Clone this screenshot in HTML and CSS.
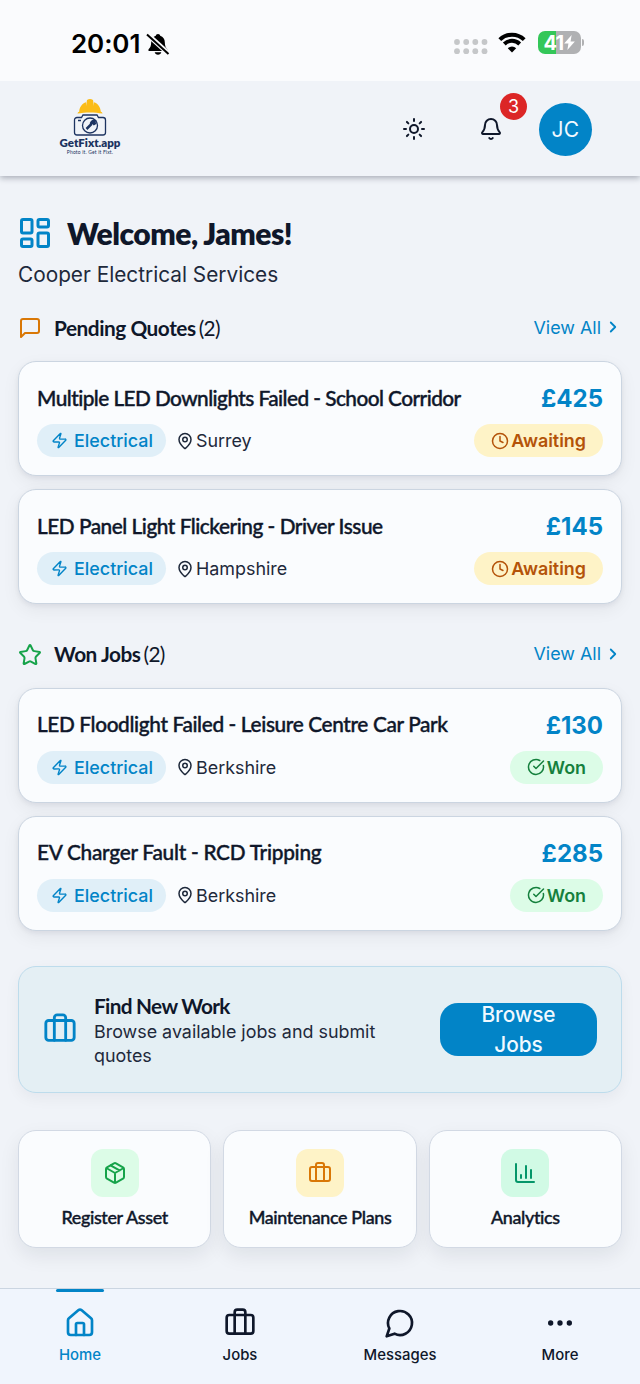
FILE: index.html
```html
<!DOCTYPE html>
<html lang="en">
<head>
<meta charset="utf-8">
<title>GetFixt.app</title>
<link rel="stylesheet" href="styles.css">
</head>
<body>
<svg class="sprite" aria-hidden="true">
  <symbol id="zap" viewBox="0 0 24 24"><path d="M4 14a1 1 0 0 1-.78-1.63l9.9-10.2a.5.5 0 0 1 .86.46l-1.92 6.02A1 1 0 0 0 13 10h7a1 1 0 0 1 .78 1.63l-9.9 10.2a.5.5 0 0 1-.86-.46l1.92-6.02A1 1 0 0 0 11 14z"/></symbol>
  <symbol id="pin" viewBox="0 0 24 24"><path d="M20 10c0 5-5.5 10.2-7.4 11.8a1 1 0 0 1-1.2 0C9.500 20.200 4 15 4 10a8 8 0 0 1 16 0"/><circle cx="12" cy="10" r="3"/></symbol>
  <symbol id="clock" viewBox="0 0 24 24"><circle cx="12" cy="12" r="10"/><path d="M12 6v6l4 2"/></symbol>
  <symbol id="check" viewBox="0 0 24 24"><path d="M21.800 10A10 10 0 1 1 17 3.340M9 11l3 3L22 4"/></symbol>
  <symbol id="chev" viewBox="0 0 24 24"><path d="m9 18 6-6-6-6"/></symbol>
  <symbol id="case" viewBox="0 0 24 24"><rect x="2" y="6" width="20" height="14" rx="2"/><path d="M16 20V4a2 2 0 0 0-2-2h-4a2 2 0 0 0-2 2v16"/></symbol>
</svg>

<div class="status">
  <span class="time">20:01</span>
  <svg class="mute" viewBox="0 0 24 24"><path class="solid" d="M12 2c1.300 0 2 .8 2.200 1.700 3 1 4.600 3.500 4.600 6.500 0 4 1.200 5.600 2.400 6.700.8.8.5 2.100-.7 2.100H3.500c-1.200 0-1.500-1.300-.7-2.100C4 15.800 5.200 14.200 5.200 10.200c0-3 1.600-5.500 4.600-6.500C10 2.800 10.700 2 12 2zM8.700 20.200h6.600c-.3 1.500-1.600 2.500-3.300 2.500s-3-1-3.300-2.500z"/><path class="gap" d="M1.500 2.500 23 22"/><path class="slash" d="M1 2.500 22.500 22"/></svg>
  <svg class="signal" viewBox="0 0 34 16"><g><circle cx="3" cy="3" r="2.900"/><circle cx="12.200" cy="3" r="2.900"/><circle cx="21.300" cy="3" r="2.900"/><circle cx="30.500" cy="3" r="2.900"/><circle cx="3" cy="12.200" r="2.900"/><circle cx="12.200" cy="12.200" r="2.900"/><circle cx="21.300" cy="12.200" r="2.900"/><circle cx="30.500" cy="12.200" r="2.900"/></g></svg>
  <svg class="wifi" viewBox="0 0 28 21"><path d="M1.800 7.600a17.500 17.500 0 0 1 24.400 0M6.300 12a11 11 0 0 1 15.400 0"/><path class="solid" d="M14 20.500l-4.200-4.200a6 6 0 0 1 8.400 0z"/></svg>
  <div class="battery"><span>41</span><svg viewBox="0 0 10 14"><path d="M7 0 0 8h4L3 14l7-8H6z"/></svg></div>
</div>

<header class="top">
  <div class="logo">
    <svg viewBox="0 0 40 38">
      <path class="hat" d="M7.500 15.500c0-1 1-1.600 1.700-1.800.2-4.500 3-8.300 6.800-9.500V8l1-6c2-1.300 4-1.300 6 0l1 6V4.200c3.800 1.200 6.600 5 6.800 9.500.8.200 1.700.8 1.700 1.800-7.500-1.500-17.500-1.500-25 0z"/>
      <path class="cam" d="M13 17h14l1.500 2.500H33a2.500 2.500 0 0 1 2.500 2.500v12.500A2.500 2.500 0 0 1 33 37H7a2.500 2.500 0 0 1-2.500-2.500V22A2.500 2.500 0 0 1 7 19.500h4.500zM8 22.500h3"/>
      <circle class="cam" cx="20" cy="27.500" r="7.500"/>
      <path class="wrench" d="m16.500 31 4.500-4.500a3 3 0 0 1 3.500-3.500l-1.500 2 1 1 2-1.200"/>
    </svg>
    <b>GetFixt.app</b>
    <small>Photo it. Get it Fixt.</small>
  </div>
  <svg class="ic sun" viewBox="0 0 24 24"><circle cx="12" cy="12" r="4"/><path d="M12 2v2M12 20v2M4.930 4.930l1.410 1.410M17.660 17.660l1.410 1.410M2 12h2M20 12h2M6.340 17.660l-1.410 1.410M19.070 4.930l-1.410 1.410"/></svg>
  <div class="bell">
    <svg class="ic" viewBox="0 0 24 24"><path d="M10.270 21a2 2 0 0 0 3.460 0M3.260 15.330A1 1 0 0 0 4 17h16a1 1 0 0 0 .74-1.670C19.410 13.960 18 12.500 18 8A6 6 0 0 0 6 8c0 4.500-1.410 5.960-2.740 7.330"/></svg>
    <span class="count">3</span>
  </div>
  <div class="avatar">JC</div>
</header>

<main>
  <h1><svg class="ic" viewBox="0 0 24 24"><rect x="3" y="3" width="7" height="9" rx="1"/><rect x="14" y="3" width="7" height="5" rx="1"/><rect x="14" y="12" width="7" height="9" rx="1"/><rect x="3" y="16" width="7" height="5" rx="1"/></svg><span>Welcome, James!</span></h1>
  <p class="company">Cooper Electrical Services</p>

  <section>
    <div class="head">
      <svg class="ic amber" viewBox="0 0 24 24"><path d="M21 15a2 2 0 0 1-2 2H7l-4 4V5a2 2 0 0 1 2-2h14a2 2 0 0 1 2 2z"/></svg>
      <h2>Pending Quotes</h2><span class="num">(2)</span>
      <a class="all">View All<svg class="ic"><use href="#chev"/></svg></a>
    </div>
    <article class="card">
      <div class="row"><h3 class="t1">Multiple LED Downlights Failed - School Corridor</h3><strong>£425</strong></div>
      <div class="row"><span class="tag"><svg class="ic"><use href="#zap"/></svg>Electrical</span><span class="place"><svg class="ic"><use href="#pin"/></svg>Surrey</span><span class="badge wait"><svg class="ic"><use href="#clock"/></svg>Awaiting</span></div>
    </article>
    <article class="card">
      <div class="row"><h3 class="t2">LED Panel Light Flickering - Driver Issue</h3><strong>£145</strong></div>
      <div class="row"><span class="tag"><svg class="ic"><use href="#zap"/></svg>Electrical</span><span class="place"><svg class="ic"><use href="#pin"/></svg>Hampshire</span><span class="badge wait"><svg class="ic"><use href="#clock"/></svg>Awaiting</span></div>
    </article>
  </section>

  <section>
    <div class="head">
      <svg class="ic green" viewBox="0 0 24 24"><path d="M11.525 2.295a.53.53 0 0 1 .95 0l2.310 4.679a2.123 2.123 0 0 0 1.595 1.160l5.166.756a.53.53 0 0 1 .294.904l-3.736 3.638a2.123 2.123 0 0 0-.611 1.878l.882 5.140a.53.53 0 0 1-.771.560l-4.618-2.428a2.122 2.122 0 0 0-1.973 0L6.396 21.010a.53.53 0 0 1-.770-.560l.881-5.139a2.122 2.122 0 0 0-.611-1.879L2.160 9.795a.53.53 0 0 1 .294-.906l5.165-.755a2.122 2.122 0 0 0 1.597-1.160z"/></svg>
      <h2>Won Jobs</h2><span class="num">(2)</span>
      <a class="all">View All<svg class="ic"><use href="#chev"/></svg></a>
    </div>
    <article class="card">
      <div class="row"><h3 class="t3">LED Floodlight Failed - Leisure Centre Car Park</h3><strong>£130</strong></div>
      <div class="row"><span class="tag"><svg class="ic"><use href="#zap"/></svg>Electrical</span><span class="place"><svg class="ic"><use href="#pin"/></svg>Berkshire</span><span class="badge won"><svg class="ic"><use href="#check"/></svg>Won</span></div>
    </article>
    <article class="card">
      <div class="row"><h3 class="t4">EV Charger Fault - RCD Tripping</h3><strong>£285</strong></div>
      <div class="row"><span class="tag"><svg class="ic"><use href="#zap"/></svg>Electrical</span><span class="place"><svg class="ic"><use href="#pin"/></svg>Berkshire</span><span class="badge won"><svg class="ic"><use href="#check"/></svg>Won</span></div>
    </article>
  </section>

  <div class="find">
    <svg class="ic"><use href="#case"/></svg>
    <div class="copy"><h3>Find New Work</h3><p>Browse available jobs and submit quotes</p></div>
    <button>Browse<br>Jobs</button>
  </div>

  <div class="tiles">
    <div class="tile"><span class="sq lime"><svg class="ic" viewBox="0 0 24 24"><path d="M11 21.730a2 2 0 0 0 2 0l7-4A2 2 0 0 0 21 16V8a2 2 0 0 0-1-1.730l-7-4a2 2 0 0 0-2 0l-7 4A2 2 0 0 0 3 8v8a2 2 0 0 0 1 1.730zM12 22V12M3.290 7 12 12l8.710-5M7.500 4.270l9 5.150"/></svg></span><h4>Register Asset</h4></div>
    <div class="tile"><span class="sq sand"><svg class="ic"><use href="#case"/></svg></span><h4>Maintenance Plans</h4></div>
    <div class="tile"><span class="sq mint"><svg class="ic" viewBox="0 0 24 24"><path d="M3 3v16a2 2 0 0 0 2 2h16M18 17V9M13 17V5M8 17v-3"/></svg></span><h4>Analytics</h4></div>
  </div>
</main>

<nav>
  <a class="on"><svg class="ic" viewBox="0 0 24 24"><path d="M15 21v-8a1 1 0 0 0-1-1h-4a1 1 0 0 0-1 1v8"/><path d="M3 10a2 2 0 0 1 .71-1.530l7-6a2 2 0 0 1 2.580 0l7 6A2 2 0 0 1 21 10v9a2 2 0 0 1-2 2H5a2 2 0 0 1-2-2z"/></svg>Home</a>
  <a><svg class="ic"><use href="#case"/></svg>Jobs</a>
  <a><svg class="ic" viewBox="0 0 24 24"><path d="M7.900 20A9 9 0 1 0 4 16.100L2 22z"/></svg>Messages</a>
  <a><svg class="ic" viewBox="0 0 24 24"><circle cx="5" cy="12" r="1"/><circle cx="12" cy="12" r="1"/><circle cx="19" cy="12" r="1"/></svg>More</a>
</nav>
</body>
</html>
```
FILE: styles.css
```css
* { box-sizing: border-box; margin: 0; padding: 0; }
body { width: 640px; height: 1384px; overflow: hidden; display: flex; flex-direction: column; background: #f0f3f8; color: #0f172a; font-family: Inter, "Liberation Sans", sans-serif; }
.sprite { position: absolute; width: 0; height: 0; }
.ic { fill: none; stroke: currentColor; stroke-width: 2; stroke-linecap: round; stroke-linejoin: round; flex: none; }
h1, h2, h3, h4, .num { font-family: Lato, Inter, sans-serif; white-space: nowrap; }

.status { height: 81px; background: #fafbfd; display: flex; align-items: center; padding: 6px 59px 0 71px; color: #000; }
.time { font-size: 26px; font-weight: 600; letter-spacing: -.1px; width: 75px; }
.mute { width: 24px; height: 24px; margin-right: auto; }
.mute .solid { fill: #000; }
.mute path { stroke-width: 2; fill: none; }
.mute .gap { stroke: #fafbfd; stroke-width: 5; }
.mute .slash { stroke: #000; }
.signal { width: 34px; height: 16px; fill: #c5c7c9; margin: 6px 10px 0 0; }
.wifi { width: 28px; height: 21px; margin: -2px 12px 0 0; fill: none; stroke: #000; stroke-width: 4; }
.wifi .solid { fill: #000; stroke: none; }
.battery { width: 43px; height: 23px; border-radius: 7px; background: linear-gradient(90deg, #34c759 18px, #b0b1b3 18px); color: #fff; display: flex; align-items: center; justify-content: center; gap: 1px; font-size: 20px; font-weight: 700; letter-spacing: -.8px; position: relative; margin-top: -2px; }
.battery::after { content: ""; position: absolute; left: 44px; top: 8px; width: 2px; height: 7px; border-radius: 0 2px 2px 0; background: #b0b1b3; }
.battery svg { width: 11px; height: 15px; fill: #fff; }

.top { height: 95px; flex: none; background: #f0f3f8; box-shadow: 0 2px 6px rgba(15, 23, 42, .32); clip-path: inset(0 0 -12px 0); display: flex; align-items: center; padding: 1px 48px 0 58px; }
.logo { width: 64px; display: flex; flex-direction: column; align-items: center; margin-right: auto; color: #1c3360; margin-top: -6px; }
.logo svg { width: 40px; height: 38px; }
.logo b { font: 800 11.500px/14px Lato, sans-serif; }
.logo small { font: 5px/6px Lato, sans-serif; white-space: nowrap; margin-top: -1px; letter-spacing: .15px; }
.hat { fill: #fbbc17; }
.cam { fill: none; stroke: #1c3360; stroke-width: 1.300; }
.wrench { fill: none; stroke: #1c3360; stroke-width: 2.500; }
.sun { width: 24px; height: 24px; margin-right: 53px; }
.bell { position: relative; height: 24px; margin-right: 36px; }
.bell svg { width: 24px; height: 24px; display: block; }
.count { position: absolute; left: 21px; top: -24px; width: 27px; height: 27px; border-radius: 50%; background: #dc2626; color: #fff; font-size: 18px; line-height: 27px; text-align: center; }
.avatar { width: 53px; height: 53px; border-radius: 50%; background: #0284c7; color: #f0f9ff; font-size: 21px; line-height: 53px; text-align: center; letter-spacing: .3px; }

main { flex: 1; padding: 33px 18px 0; }
h1 { height: 49px; display: flex; align-items: center; gap: 13px; font-size: 30px; font-weight: 800; letter-spacing: -.5px; }
h1 svg { width: 36px; height: 36px; color: #0284c7; margin: -2px 1px 0 -1px; }
h1 span { margin-top: -2px; }
.company { font-size: 20.800px; line-height: 34px; color: #1e293b; }
section { margin-bottom: 35px; }
.company + section { margin-bottom: 25px; }
.head { display: flex; align-items: center; height: 40px; margin: 16px 0 13px; }
.head > .ic { width: 24px; height: 24px; margin-right: 12px; }
section + section .head { margin: 0 0 7.500px; height: 51px; }
.amber { color: #d97706; }
.green { color: #16a34a; }
h2 { font-size: 20.800px; font-weight: 700; letter-spacing: -.46px; margin-top: -2px; }
.num { font-size: 20.800px; margin: -2px 0 0 3px; letter-spacing: -.7px; }
.all { margin: -2px 0 0 auto; display: flex; align-items: center; gap: 3px; color: #0284c7; font-size: 17.900px; }
.all svg { width: 18px; height: 18px; stroke-width: 2.400; }
.card { height: 115px; border: 1.500px solid #cbd5e1; border-radius: 18px; background: #fafcfe; padding: 17px 18px 0; margin-bottom: 13px; box-shadow: 0 2px 5px rgba(15, 23, 42, .06), 0 6px 18px rgba(15, 23, 42, .06); }
.row { display: flex; align-items: center; height: 37px; }
.row + .row { height: 33px; margin-top: 8px; }
h3 { font-size: 20.800px; font-weight: 500; }
.row h3 { margin-top: -1px; -webkit-text-stroke: .4px currentColor; }
.t1 { letter-spacing: -.55px; }
.t2 { letter-spacing: -.47px; }
.t3 { letter-spacing: -.36px; }
.t4 { letter-spacing: -.25px; }
strong { margin: 2px 0 0 auto; color: #0284c7; font-size: 24px; font-weight: 700; }
.tag, .badge { display: flex; align-items: center; height: 33px; border-radius: 17px; font-size: 17.900px; font-weight: 500; }
.tag { width: 129px; padding-left: 14px; gap: 6px; background: #e0eff8; color: #0284c7; }
.tag svg { width: 17px; height: 17px; }
.place { display: flex; align-items: center; gap: 2px; margin-left: 10px; font-size: 17.900px; color: #1e293b; }
.place svg, .badge svg { width: 18px; height: 18px; }
.badge { margin-left: auto; padding: 0 17px; gap: 2px; font-weight: 600; }
.wait { background: #fef3c7; color: #b45309; }
.won { background: #dcfce7; color: #15803d; }

.find { height: 127px; border: 1.500px solid #bddcec; border-radius: 18px; background: #e4eff4; display: flex; align-items: center; padding: 0 24px; box-shadow: 0 5px 15px rgba(15, 23, 42, .05); }
.find > svg { width: 34px; height: 34px; color: #0284c7; margin-right: 17px; }
.copy { flex: 1; padding: 3px 40px 0 0; }
.copy h3 { font-weight: 700; line-height: 26px; letter-spacing: -.7px; }
.copy p { font-size: 17.900px; line-height: 24px; color: #1e293b; margin-top: 1px; }
button { width: 157px; height: 53px; border: 0; border-radius: 18px; background: #0284c7; color: #f0f9ff; font: 500 20.800px/30px Inter, sans-serif; display: flex; align-items: center; justify-content: center; padding-top: 2px; }
.tiles { display: grid; grid-template-columns: repeat(3, 1fr); gap: 12px; margin-top: 37px; }
.tile { height: 118px; border: 1.500px solid #d2d9e4; border-radius: 18px; background: #fafcfe; display: flex; flex-direction: column; align-items: center; padding-top: 18px; box-shadow: 0 8px 20px rgba(15, 23, 42, .08); }
.sq { width: 48px; height: 48px; border-radius: 12px; display: grid; place-items: center; }
.sq svg { width: 24px; height: 24px; }
.lime { background: #dcfce7; color: #16a34a; }
.sand { background: #fef3c7; color: #d97706; }
.mint { background: #d1fae5; color: #059669; }
h4 { font-size: 17.900px; font-weight: 500; margin-top: 9px; letter-spacing: -.35px; -webkit-text-stroke: .4px currentColor; }

nav { height: 96px; flex: none; border-top: 1.500px solid #cbd5e1; background: #f0f5fd; display: grid; grid-template-columns: repeat(4, 1fr); position: relative; }
nav a { display: flex; flex-direction: column; align-items: center; padding-top: 18px; gap: 6px; font-size: 14.900px; font-weight: 500; line-height: 20px; position: relative; }
nav svg { width: 32px; height: 32px; }
.on { color: #0284c7; }
.on::before { content: ""; position: absolute; top: 0; width: 48px; height: 3px; border-radius: 2px; background: #0284c7; }
```
